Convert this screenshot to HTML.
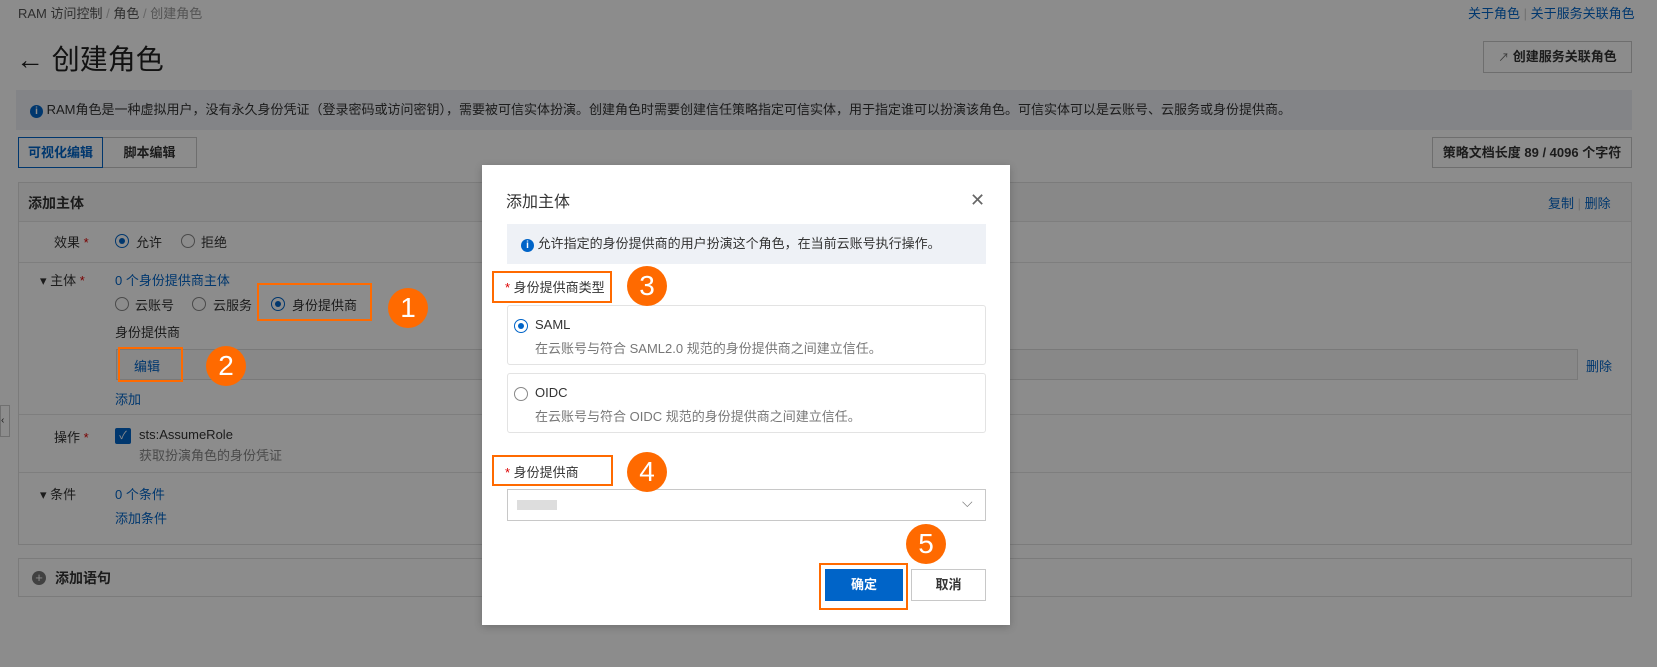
<!DOCTYPE html>
<html><head><meta charset="utf-8"><style>
*{box-sizing:border-box;margin:0;padding:0}
body{width:1657px;height:667px;overflow:hidden;background:#fff;font-family:"Liberation Sans","Noto Sans CJK SC",sans-serif;font-size:13px;color:#333;position:relative}
.a{position:absolute;white-space:nowrap}
.blue{color:#0064c8}
.radio{position:absolute;width:14px;height:14px;border:1px solid #888;border-radius:50%;background:#fff}
.radio.on{border-color:#0064c8}
.radio.on:after{content:"";position:absolute;left:3px;top:3px;width:6px;height:6px;border-radius:50%;background:#0064c8}
.line{position:absolute;height:1px;background:#e5e5e5}
.ob{position:absolute;border:2.5px solid #ff6a00}
.num{position:absolute;width:40px;height:40px;border-radius:50%;background:#ff6a00;color:#fff;font-size:28px;text-align:center;line-height:40px}
</style></head><body>
<div class="a" style="left:18px;top:3px;color:#555">RAM 访问控制 <span style="color:#bbb">/</span> 角色 <span style="color:#bbb">/</span> <span style="color:#999">创建角色</span></div>
<div class="a blue" style="left:1468px;top:3px">关于角色 <span style="color:#ccc">|</span> 关于服务关联角色</div>
<div class="a" style="left:16px;top:38px;font-size:28px;color:#222"><b>←</b> 创建角色</div>
<div class="a" style="left:1483px;top:41px;width:149px;height:32px;border:1px solid #c8c8c8;font-weight:bold;text-align:center;line-height:30px"><span style="font-weight:normal;color:#666;font-size:11px">↗</span> 创建服务关联角色</div>
<div class="a" style="left:16px;top:90px;width:1616px;height:40px;background:#eef1f6;line-height:40px;padding-left:14px"><span style="display:inline-block;width:13px;height:13px;border-radius:50%;background:#0064c8;color:#fff;font-size:10px;text-align:center;line-height:13px;font-weight:bold">i</span> RAM角色是一种虚拟用户，没有永久身份凭证（登录密码或访问密钥），需要被可信实体扮演。创建角色时需要创建信任策略指定可信实体，用于指定谁可以扮演该角色。可信实体可以是云账号、云服务或身份提供商。</div>
<div class="a" style="left:18px;top:137px;width:85px;height:31px;border:1px solid #0064c8;color:#0064c8;font-weight:bold;text-align:center;line-height:29px">可视化编辑</div>
<div class="a" style="left:103px;top:137px;width:94px;height:31px;border:1px solid #c8c8c8;border-left:none;font-weight:bold;text-align:center;line-height:29px">脚本编辑</div>
<div class="a" style="left:1432px;top:137px;width:200px;height:31px;border:1px solid #c8c8c8;font-weight:bold;text-align:center;line-height:29px">策略文档长度 89 / 4096 个字符</div>
<div class="a" style="left:18px;top:182px;width:1614px;height:363px;border:1px solid #e0e0e0"></div>
<div class="a" style="left:19px;top:183px;width:1612px;height:38px;background:#f7f7f7"></div>
<div class="a" style="left:28px;top:193px;font-weight:bold;font-size:14px">添加主体</div>
<div class="a blue" style="left:1548px;top:193px">复制 <span style="color:#ccc">|</span> 删除</div>
<div class="line" style="left:19px;top:221px;width:1612px"></div>
<div class="a" style="left:54px;top:232px">效果 <span style="color:#d00">*</span></div>
<div class="radio on" style="left:115px;top:234px"></div><div class="a" style="left:136px;top:232px">允许</div>
<div class="radio" style="left:181px;top:234px"></div><div class="a" style="left:201px;top:232px">拒绝</div>
<div class="line" style="left:19px;top:262px;width:1612px"></div>
<div class="a" style="left:40px;top:270px">▾ 主体 <span style="color:#d00">*</span></div>
<div class="a blue" style="left:115px;top:270px">0 个身份提供商主体</div>
<div class="radio" style="left:115px;top:297px"></div><div class="a" style="left:135px;top:295px">云账号</div>
<div class="radio" style="left:192px;top:297px"></div><div class="a" style="left:213px;top:295px">云服务</div>
<div class="radio on" style="left:271px;top:297px"></div><div class="a" style="left:292px;top:295px">身份提供商</div>
<div class="a" style="left:115px;top:322px">身份提供商</div>
<div class="a" style="left:116px;top:349px;width:1462px;height:31px;border:1px solid #ddd;background:#f7f7f7"></div>
<div class="a blue" style="left:134px;top:356px">编辑</div>
<div class="a blue" style="left:1586px;top:356px">删除</div>
<div class="a blue" style="left:115px;top:389px">添加</div>
<div class="line" style="left:19px;top:414px;width:1612px"></div>
<div class="a" style="left:0;top:405px;width:10px;height:32px;border:1px solid #ccc;background:#fff;font-size:10px;line-height:30px">‹</div>
<div class="a" style="left:54px;top:427px">操作 <span style="color:#d00">*</span></div>
<div class="a" style="left:115px;top:428px;width:16px;height:16px;background:#0064c8;border-radius:2px;color:#fff;font-size:11px;text-align:center;line-height:16px">✓</div>
<div class="a" style="left:139px;top:427px">sts:AssumeRole</div>
<div class="a" style="left:139px;top:445px;color:#888">获取扮演角色的身份凭证</div>
<div class="line" style="left:19px;top:472px;width:1612px"></div>
<div class="a" style="left:40px;top:484px">▾ 条件</div>
<div class="a blue" style="left:115px;top:484px">0 个条件</div>
<div class="a blue" style="left:115px;top:508px">添加条件</div>
<div class="a" style="left:18px;top:558px;width:1614px;height:39px;border:1px solid #e0e0e0"></div>
<div class="a" style="left:32px;top:571px;width:14px;height:14px;border-radius:50%;background:#777;color:#fff;font-size:13px;line-height:13px;text-align:center">+</div>
<div class="a" style="left:55px;top:568px;font-weight:bold;font-size:14px">添加语句</div>

<div class="a" style="left:0;top:0;width:1657px;height:667px;background:rgba(0,0,0,0.45)"></div>

<div class="a" style="left:482px;top:165px;width:528px;height:460px;background:#fff;box-shadow:0 2px 8px rgba(0,0,0,.2)"></div>
<div class="a" style="left:506px;top:188px;font-size:16px;color:#333">添加主体</div>
<div class="a" style="left:970px;top:190px;font-size:18px;color:#666">✕</div>
<div class="a" style="left:507px;top:224px;width:479px;height:40px;background:#eef1f6;line-height:40px;padding-left:14px;color:#333"><span style="display:inline-block;width:13px;height:13px;border-radius:50%;background:#0064c8;color:#fff;font-size:10px;text-align:center;line-height:13px;font-weight:bold">i</span> 允许指定的身份提供商的用户扮演这个角色，在当前云账号执行操作。</div>
<div class="a" style="left:505px;top:277px"><span style="color:#d00">*</span> 身份提供商类型</div>
<div class="a" style="left:507px;top:305px;width:479px;height:60px;border:1px solid #e3e3e3;border-radius:3px"></div>
<div class="radio on" style="left:514px;top:319px"></div>
<div class="a" style="left:535px;top:317px">SAML</div>
<div class="a" style="left:535px;top:338px;color:#777">在云账号与符合 SAML2.0 规范的身份提供商之间建立信任。</div>
<div class="a" style="left:507px;top:373px;width:479px;height:60px;border:1px solid #e3e3e3;border-radius:3px"></div>
<div class="radio" style="left:514px;top:387px"></div>
<div class="a" style="left:535px;top:385px">OIDC</div>
<div class="a" style="left:535px;top:406px;color:#777">在云账号与符合 OIDC 规范的身份提供商之间建立信任。</div>
<div class="a" style="left:505px;top:462px"><span style="color:#d00">*</span> 身份提供商</div>
<div class="a" style="left:507px;top:489px;width:479px;height:32px;border:1px solid #c8c8c8"></div>
<div class="a" style="left:517px;top:500px;width:40px;height:10px;background:#ddd"></div>
<div class="a" style="left:962px;top:494px;color:#777;font-size:14px">⌵</div>
<div class="a" style="left:825px;top:569px;width:78px;height:32px;background:#0064c8;color:#fff;font-weight:bold;text-align:center;line-height:32px">确定</div>
<div class="a" style="left:911px;top:569px;width:75px;height:32px;border:1px solid #c8c8c8;font-weight:bold;text-align:center;line-height:30px">取消</div>

<div class="ob" style="left:257px;top:283px;width:115px;height:38px"></div>
<div class="num" style="left:388px;top:288px">1</div>
<div class="ob" style="left:118px;top:347px;width:65px;height:35px"></div>
<div class="num" style="left:206px;top:346px">2</div>
<div class="ob" style="left:492px;top:271px;width:120px;height:32px"></div>
<div class="num" style="left:627px;top:266px">3</div>
<div class="ob" style="left:492px;top:455px;width:121px;height:31px"></div>
<div class="num" style="left:627px;top:452px">4</div>
<div class="ob" style="left:819px;top:563px;width:89px;height:47px"></div>
<div class="num" style="left:906px;top:524px">5</div>
</body></html>
